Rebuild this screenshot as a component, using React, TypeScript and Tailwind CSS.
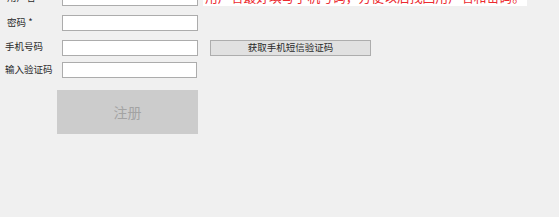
import React from 'react';

const font = { fontFamily: '"Noto Sans CJK SC", "Noto Sans", sans-serif' };

const Box = ({ w = 'w-[136px]' }: { w?: string }) => (
  <div className={`${w} h-[16px] bg-white border border-[#acacac] shrink-0`} />
);

export default function App() {
  return (
    <div className="w-[559px] h-[217px] bg-[#f0f0f0] overflow-hidden text-[#2a2a2a]" style={font}>
      <div className="flex flex-col -mt-[10px]">
        {/* 用户名 */}
        <div className="flex items-center h-[16px]">
          <span className="w-[62px] pl-[7px] text-[9.5px] leading-none">用户名 *</span>
          <Box />
          <span className="ml-[5px] bg-white px-[2px] h-[16px] leading-[14px] text-[12.8px] text-[#ec2a30] whitespace-nowrap">
            用户名最好填写手机号码，方便以后找回用户名和密码。
          </span>
        </div>

        {/* 密码 */}
        <div className="flex items-center h-[16px] mt-[9px]">
          <span className="w-[62px] pl-[7px] text-[9.5px] leading-none">密码 *</span>
          <Box />
        </div>

        {/* 手机号码 */}
        <div className="flex items-center h-[16px] mt-[9px]">
          <span className="w-[62px] pl-[5px] text-[9.5px] leading-none -mt-[3px]">手机号码</span>
          <Box />
          <button className="ml-[12px] w-[161px] h-[16px] bg-[#e1e1e1] border border-[#adadad] text-[9.5px] leading-none text-[#2a2a2a]">
            获取手机短信验证码
          </button>
        </div>

        {/* 验证码 */}
        <div className="flex items-center h-[16px] mt-[6px]">
          <span className="w-[62px] pl-[5px] text-[9.5px] leading-none">输入验证码</span>
          <Box w="w-[135px]" />
        </div>

        <div className="mt-[12px] pl-[57px]">
          <button className="w-[141px] h-[44px] bg-[#cccccc] text-[14px] text-[#a3a3a3] flex items-center justify-center">
            注册
          </button>
        </div>
      </div>
    </div>
  );
}
